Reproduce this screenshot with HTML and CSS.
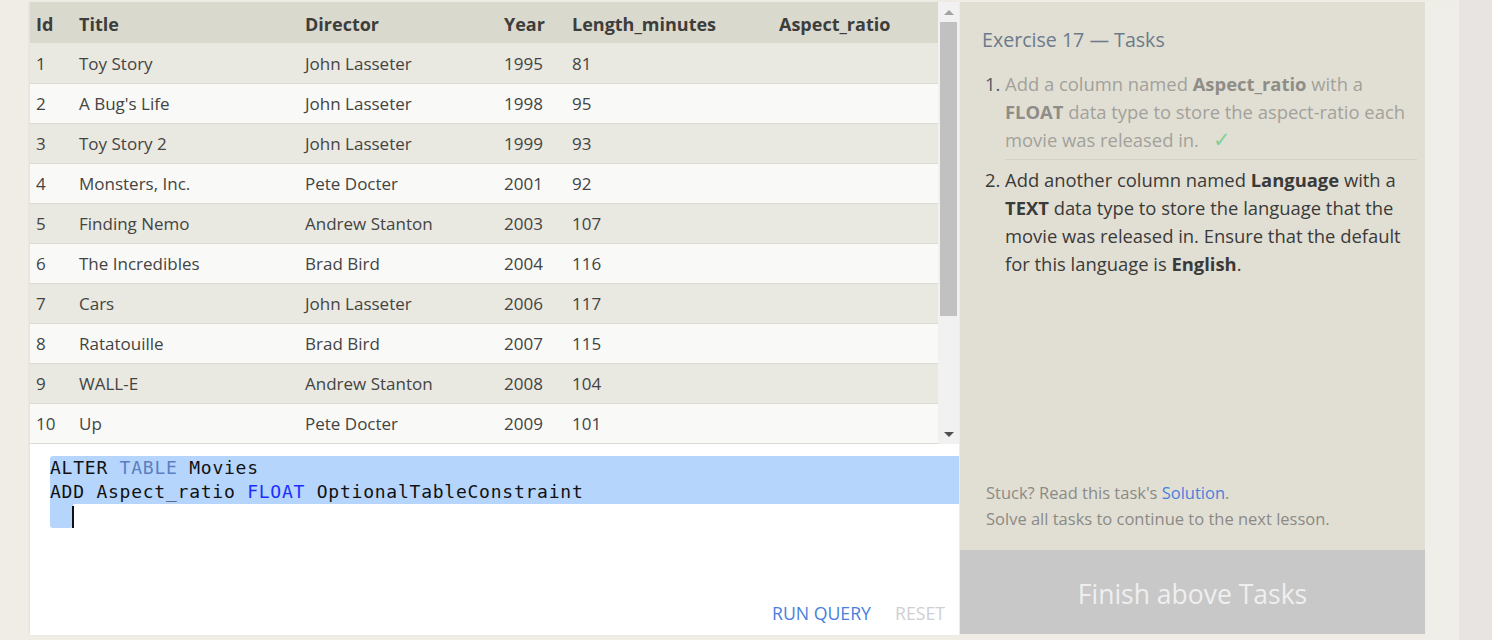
FILE: index.html
```html
<!DOCTYPE html>
<html lang="en">
<head>
<meta charset="utf-8">
<title>SQL Lesson — Exercise 17</title>
<link rel="stylesheet" href="styles.css">
</head>
<body>
<div class="page">
  <div class="gutter"></div>
  <main class="workspace">
    <div class="results">
      <div class="table-view">
        <table class="grid">
          <colgroup>
            <col class="c-id"><col class="c-title"><col class="c-dir"><col class="c-year"><col class="c-len"><col class="c-asp">
          </colgroup>
          <thead>
            <tr><th>Id</th><th>Title</th><th>Director</th><th>Year</th><th>Length_minutes</th><th>Aspect_ratio</th></tr>
          </thead>
          <tbody>
            <tr><td>1</td><td>Toy Story</td><td>John Lasseter</td><td>1995</td><td>81</td><td></td></tr>
            <tr><td>2</td><td>A Bug's Life</td><td>John Lasseter</td><td>1998</td><td>95</td><td></td></tr>
            <tr><td>3</td><td>Toy Story 2</td><td>John Lasseter</td><td>1999</td><td>93</td><td></td></tr>
            <tr><td>4</td><td>Monsters, Inc.</td><td>Pete Docter</td><td>2001</td><td>92</td><td></td></tr>
            <tr><td>5</td><td>Finding Nemo</td><td>Andrew Stanton</td><td>2003</td><td>107</td><td></td></tr>
            <tr><td>6</td><td>The Incredibles</td><td>Brad Bird</td><td>2004</td><td>116</td><td></td></tr>
            <tr><td>7</td><td>Cars</td><td>John Lasseter</td><td>2006</td><td>117</td><td></td></tr>
            <tr><td>8</td><td>Ratatouille</td><td>Brad Bird</td><td>2007</td><td>115</td><td></td></tr>
            <tr><td>9</td><td>WALL-E</td><td>Andrew Stanton</td><td>2008</td><td>104</td><td></td></tr>
            <tr><td>10</td><td>Up</td><td>Pete Docter</td><td>2009</td><td>101</td><td></td></tr>
          </tbody>
        </table>
      </div>
      <div class="scrollbar">
        <span class="arrow"><span class="tri-up"></span></span>
        <span class="thumb"></span>
        <span class="track-fill"></span>
        <span class="arrow"><span class="tri-down"></span></span>
      </div>
    </div>
    <div class="editor">
      <div class="code">
        <div class="line sel">ALTER <span class="kw-soft">TABLE</span> Movies</div>
        <div class="line sel">ADD Aspect_ratio <span class="kw">FLOAT</span> OptionalTableConstraint</div>
        <div class="line"><span class="sel-end"></span><span class="caret"></span></div>
      </div>
      <div class="actions">
        <span class="run">RUN QUERY</span>
        <span class="reset">RESET</span>
      </div>
    </div>
  </main>
  <aside class="tasks">
    <div class="tasks-body">
      <h2 class="tasks-title">Exercise 17 — Tasks</h2>
      <ol class="task-list">
        <li class="done">Add a column named <b>Aspect_ratio</b> with a <b>FLOAT</b> data type to store the aspect-ratio each movie was released in. <span class="check">✓</span></li>
        <li>Add another column named <b>Language</b> with a <b>TEXT</b> data type to store the language that the movie was released in. Ensure that the default for this language is <b>English</b>.</li>
      </ol>
    </div>
    <div class="hint">
      <div>Stuck? Read this task's <span class="link">Solution</span>.</div>
      <div>Solve all tasks to continue to the next lesson.</div>
    </div>
    <div class="finish">Finish above Tasks</div>
  </aside>
  <div class="spacer"></div>
  <div class="strip"></div>
</div>
</body>
</html>
```

FILE: styles.css
```css
html, body {
  margin: 0;
  padding: 0;
}

body {
  background: #efede6;
  font-family: "Open Sans", "Noto Sans", sans-serif;
  color: #3b3b3b;
  overflow: hidden;
}

.page {
  display: flex;
  height: 640px;
  padding-top: 2px;
  box-sizing: border-box;
}

.gutter {
  width: 30px;
  flex: none;
}

.workspace {
  width: 929px;
  height: 633px;
  flex: none;
  display: flex;
  flex-direction: column;
  box-shadow: -1px 0 2px rgba(0, 0, 0, 0.06);
}

.results {
  display: flex;
  height: 442px;
  flex: none;
}

.table-view {
  width: 908px;
  overflow: hidden;
}

.grid {
  width: 908px;
  table-layout: fixed;
  border-collapse: collapse;
  font-size: 17px;
}

.c-id { width: 43px; }
.c-title { width: 226px; }
.c-dir { width: 199px; }
.c-year { width: 68px; }
.c-len { width: 207px; }
.c-asp { width: 165px; }

.grid th {
  background: #dad9ce;
  height: 41px;
  padding: 2px 0 0 6px;
  text-align: left;
  font-weight: 700;
  font-size: 18px;
  color: #3d3d3b;
  box-sizing: border-box;
}

.grid td {
  height: 40px;
  padding: 1px 0 0 6px;
  box-sizing: border-box;
  color: #444442;
  white-space: nowrap;
}

.grid tbody tr {
  border-bottom: 1px solid #dcdbd3;
}

.grid tbody tr:nth-child(odd) {
  background: #e9e8e1;
}

.grid tbody tr:nth-child(even) {
  background: #f9f9f8;
}

.scrollbar {
  width: 21px;
  background: #f1f1f1;
  display: flex;
  flex-direction: column;
}

.arrow {
  height: 20px;
  display: flex;
  align-items: center;
  justify-content: center;
  flex: none;
}

.tri-up {
  width: 0;
  height: 0;
  border-left: 5px solid transparent;
  border-right: 5px solid transparent;
  border-bottom: 5px solid #a3a3a3;
}

.tri-down {
  width: 0;
  height: 0;
  border-left: 5px solid transparent;
  border-right: 5px solid transparent;
  border-top: 5px solid #505050;
}

.thumb {
  height: 294px;
  margin: 0 2px;
  background: #c1c1c1;
  flex: none;
}

.track-fill {
  flex: 1;
}

.editor {
  flex: 1;
  background: #ffffff;
  display: flex;
  flex-direction: column;
  padding-top: 12px;
}

.code {
  padding-left: 20px;
  font-family: "DejaVu Sans Mono", "Liberation Mono", monospace;
  font-size: 18px;
  letter-spacing: 0.76px;
  line-height: 24px;
  color: #111;
}

.line {
  height: 24px;
  white-space: pre;
  display: flex;
  align-items: stretch;
}

.line.sel {
  background: #b5d5fd;
}

.line.sel:first-child {
  border-top-left-radius: 3px;
}

.sel-end {
  width: 23px;
  background: #b5d5fd;
  border-radius: 0 0 3px 3px;
}

.caret {
  width: 2px;
  margin: 2px 0 0 -1px;
  background: #111;
}

.kw-soft {
  color: #5b7fc0;
}

.kw {
  color: #1a2fff;
}

.actions {
  margin-top: auto;
  display: flex;
  justify-content: flex-end;
  gap: 24px;
  padding: 0 14px 10px 0;
  font-size: 17.7px;
  line-height: 24px;
}

.run {
  color: #4a7fdc;
}

.reset {
  color: #cfcfcf;
}

.tasks {
  width: 465px;
  height: 632px;
  flex: none;
  margin-left: 1px;
  background: #e1dfd4;
  display: flex;
  flex-direction: column;
}

.tasks-body {
  flex: 1;
  padding: 24px 8px 0 22px;
}

.tasks-title {
  margin: 0 0 10px;
  font-size: 19.6px;
  font-weight: 400;
  line-height: 28px;
  color: #6c7a8a;
}

.task-list {
  margin: 0;
  padding-left: 23px;
  font-size: 18.4px;
  line-height: 28px;
  color: #3a3a38;
}

.task-list li {
  padding: 6px 0 6px;
}

.task-list li.done {
  padding-bottom: 5px;
  border-bottom: 1px solid #d4d2c7;
  color: #a2a19b;
}

.task-list li.done::marker {
  color: #4e5a68;
}

.task-list li.done b {
  color: #8e8d87;
}

.task-list b {
  font-weight: 700;
}

.check {
  color: #82cf93;
  font-size: 21px;
  line-height: 1;
  margin-left: 9px;
}

.hint {
  padding-left: 26px;
  font-size: 16.5px;
  line-height: 26px;
  color: #8b8a86;
  margin-bottom: 18px;
}

.link {
  color: #4a7fdc;
}

.finish {
  height: 84px;
  box-sizing: border-box;
  padding-top: 3px;
  flex: none;
  background: #c8c8c8;
  color: #efefef;
  font-size: 26.5px;
  display: flex;
  align-items: center;
  justify-content: center;
}

.spacer {
  width: 34px;
  flex: none;
  background: #f0eee8;
}

.strip {
  flex: 1;
  background: #e7e4e1;
  margin-top: -2px;
}
```
